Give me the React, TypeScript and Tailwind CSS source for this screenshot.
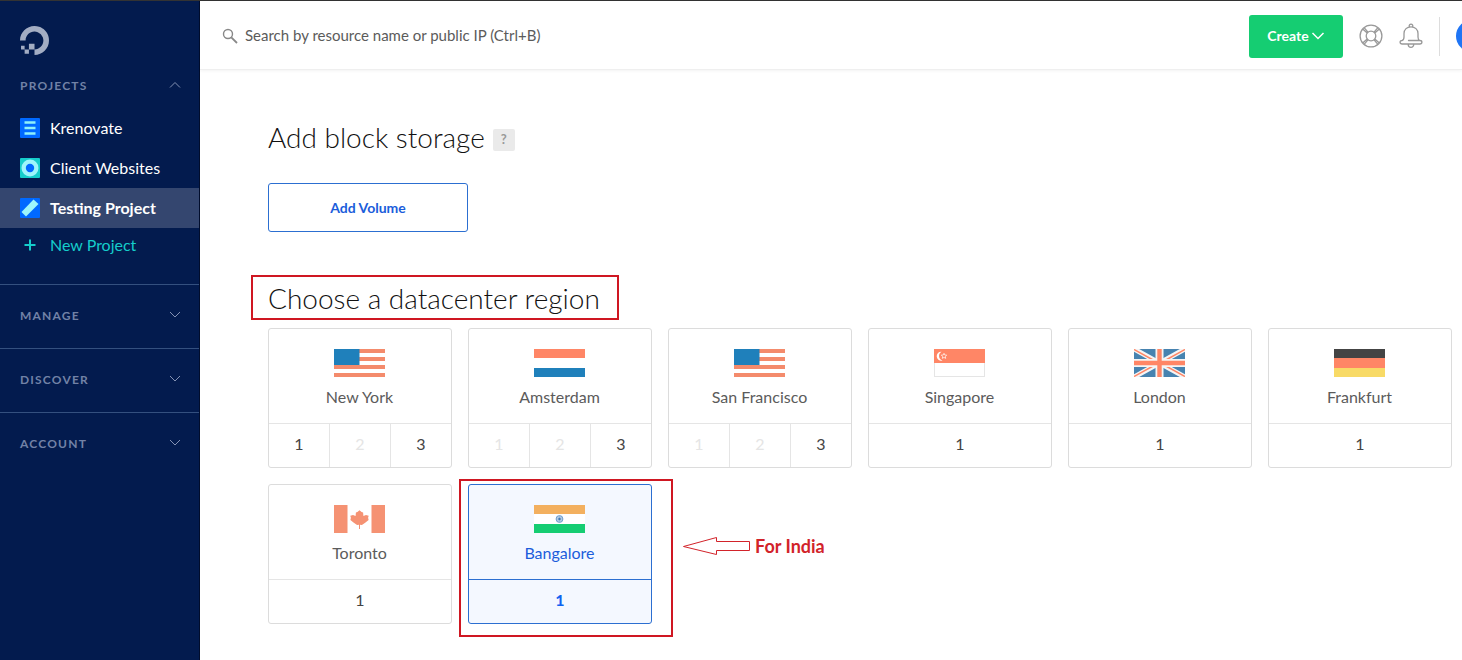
import type { ReactNode } from 'react';

function Logo() {
  return (
    <svg viewBox="0 0 24 24" className="size-[29px] fill-[#a3adc3]" aria-hidden="true">
      <path d="M12.04 0C5.408-.02.005 5.37.005 11.992h4.638c0-4.923 4.882-8.731 10.064-6.855a6.95 6.95 0 0 1 4.147 4.148c1.889 5.177-1.924 10.055-6.84 10.064v-4.61H7.391v4.623h4.61V24c7.86 0 13.967-7.588 11.397-15.83-1.115-3.59-3.985-6.446-7.575-7.575A12.8 12.8 0 0 0 12.039 0zM7.39 19.362H3.828v3.564H7.39zm-3.563 0v-2.978H.85v2.978z" />
    </svg>
  );
}

function Chevron({ up = false }: { up?: boolean }) {
  return (
    <svg viewBox="0 0 12 8" className="mb-[2px] h-2 w-3 fill-none stroke-[#8492b3]" aria-hidden="true">
      <path d={up ? 'M1 6.5 6 1.5 11 6.5' : 'M1 1 6 6 11 1'} />
    </svg>
  );
}

function ListIcon() {
  return (
    <svg viewBox="0 0 20 20" className="size-5" aria-hidden="true">
      <rect width="20" height="20" rx="1" fill="#0069ff" />
      <path d="M4.500 4.500h11M4.500 10h11M4.500 15.500h11" stroke="#8ff0fa" strokeWidth="2.600" />
    </svg>
  );
}

function CircleIcon() {
  return (
    <svg viewBox="0 0 20 20" className="size-5" aria-hidden="true">
      <rect width="20" height="20" rx="1" fill="#15cdcb" />
      <circle cx="10" cy="10" r="8.500" fill="#9df5fb" />
      <circle cx="10" cy="10" r="4.200" fill="#0069ff" />
    </svg>
  );
}

function SlashIcon() {
  return (
    <svg viewBox="0 0 20 20" className="size-5" aria-hidden="true">
      <rect width="20" height="20" rx="1" fill="#0069ff" />
      <path d="M1.500 14 13.500 1.500 18.500 6 6 18.500Z" fill="#9df5fb" />
    </svg>
  );
}

const projects: { name: string; icon: ReactNode; active?: boolean }[] = [
  { name: 'Krenovate', icon: <ListIcon /> },
  { name: 'Client Websites', icon: <CircleIcon /> },
  { name: 'Testing Project', icon: <SlashIcon />, active: true },
];

function Sidebar() {
  return (
    <aside className="w-[200px] shrink-0 border-r border-[#010d2c] bg-[#031b4e] pb-6">
      <a href="#home" aria-label="Home" className="block px-5 pt-[25px]">
        <Logo />
      </a>
      <button type="button" className="mt-[21px] flex h-5 w-full items-center justify-between pr-[18px] pl-5 text-xs font-bold tracking-widest text-[#7282a6]">
        PROJECTS
        <Chevron up />
      </button>
      <nav aria-label="Projects" className="mt-3">
        {projects.map((p) => (
          <a
            key={p.name}
            href="#project"
            className={
              p.active
                ? 'flex h-10 items-center gap-[10px] bg-[#34466f] px-5 pb-px font-bold text-white'
                : 'flex h-10 items-center gap-[10px] px-5 pb-px text-white'
            }
          >
            {p.icon}
            {p.name}
          </a>
        ))}
        <a href="#new" className="flex h-9 items-center gap-[10px] px-5 pb-[2px] text-[#15cdcb]">
          <svg viewBox="0 0 20 20" className="size-5 fill-none stroke-current stroke-2" aria-hidden="true">
            <path d="M10 4.500v11M4.500 10h11" />
          </svg>
          New Project
        </a>
      </nav>
      <div className="mt-5">
        {['MANAGE', 'DISCOVER', 'ACCOUNT'].map((s) => (
          <button
            key={s}
            type="button"
            className="flex h-16 w-full items-center justify-between border-t border-[#34507f] pr-[18px] pb-[2px] pl-5 text-xs font-bold tracking-widest text-[#7282a6]"
          >
            {s}
            <Chevron />
          </button>
        ))}
      </div>
    </aside>
  );
}

function Header() {
  return (
    <header className="flex h-[69px] items-center overflow-hidden border-b border-[#efefef] pl-[22px] shadow-[0_1px_3px_rgba(0,0,0,0.05)]">
      <label htmlFor="search" aria-label="Search" className="pt-[2px] text-[#888]">
        <svg viewBox="0 0 16 16" className="size-4 fill-none stroke-current" aria-hidden="true">
          <circle cx="6" cy="6" r="4.500" strokeWidth="1.400" />
          <path d="m9.300 9.300 5.700 5.700" strokeWidth="1.800" />
        </svg>
      </label>
      <input
        id="search"
        type="search"
        placeholder="Search by resource name or public IP (Ctrl+B)"
        className="h-10 min-w-0 flex-1 px-[7px] text-[15px] text-[#444] outline-none placeholder:text-[#5b5b5b]"
      />
      <div className="-mr-[26px] flex shrink-0 items-center pt-[2px]">
        <button type="button" className="flex h-[43px] w-[94px] items-center justify-center gap-[2px] rounded-[3px] bg-[#15cd72] text-sm font-bold text-white">
          Create
          <svg viewBox="0 0 14 10" className="h-[10px] w-[14px] fill-none stroke-current" aria-hidden="true">
            <path d="m1.500 2 5.500 5.500L12.500 2" strokeWidth="1.500" />
          </svg>
        </button>
        <button type="button" aria-label="Support" className="ml-4 text-[#999]">
          <svg viewBox="0 0 24 24" className="size-6 fill-none stroke-current" strokeWidth="1.300" aria-hidden="true">
            <circle cx="12" cy="12" r="10.900" />
            <circle cx="12" cy="12" r="4.800" />
            <path d="m4 5.200 4.200 3.800M5.300 3.900 9 8.200M20 5.200l-4.200 3.800M18.700 3.900 15 8.200M4 18.800 8.200 15M5.300 20.100 9 15.800M20 18.800 15.800 15M18.700 20.100 15 15.800" />
          </svg>
        </button>
        <button type="button" aria-label="Notifications" className="ml-4 text-[#999]">
          <svg viewBox="0 0 24 26" className="h-[26px] w-6 fill-none stroke-current" strokeWidth="1.300" strokeLinecap="round" strokeLinejoin="round" aria-hidden="true">
            <path d="M10.300 3.500a1.800 1.800 0 1 1 3.400 0M9.500 17.500H20.800c2.800 0 2.800 3.500 0 3.500H3.200c-2.800 0-2.800-3.500-.2-3.500 1.800-.4 2-1.800 2-3.500V10.500C5 6.500 8 3.800 12 3.800s7 2.700 7 6.700V14c0 1.700.3 3 1.800 3.500M9.200 21.200c0 4.200 5.600 4.200 5.600 0" />
          </svg>
        </button>
        <span className="ml-4 h-[39px] w-px bg-[#ddd]" />
        <button type="button" aria-label="Account menu" className="ml-4 size-8 rounded-full bg-[#1f75f5]" />
      </div>
    </header>
  );
}

function UsFlag() {
  return (
    <>
      <path d="M0 2h51M0 10h51M0 18h51M0 26h51" stroke="#f48b6c" strokeWidth="4" />
      <rect width="25.500" height="16" fill="#1f80bb" />
    </>
  );
}

const flags: Record<string, ReactNode> = {
  us: <UsFlag />,
  nl: (
    <>
      <rect width="51" height="9" fill="#ff8666" />
      <rect y="19" width="51" height="9" fill="#1f80bb" />
    </>
  ),
  sg: (
    <>
      <rect x=".5" y=".5" width="50" height="27" fill="#fff" stroke="#e5e5e5" />
      <rect width="51" height="14" fill="#ff8666" />
      <path d="M7.500 2.700a4.500 4.500 0 1 0 1 8.800 4.800 4.800 0 0 1-1-8.800Z" fill="#fff" />
      <path d="m10 4.300.8 1.700 1.900.2-1.400 1.300.4 1.900-1.700-1-1.700 1 .4-1.900-1.400-1.300 1.900-.2Z" fill="none" stroke="#fff" strokeWidth=".7" />
    </>
  ),
  gb: (
    <>
      <rect width="51" height="28" fill="#4783b0" />
      <path d="M0 0 51 28M51 0 0 28" stroke="#f5f5f5" strokeWidth="5" />
      <path d="M0 .5 20 11.500M51 .5 31 11.500M0 27.500 20 16.500M51 27.500 31 16.500" stroke="#ff8666" strokeWidth="1.500" />
      <path d="M25.500 0v28M0 14h51" stroke="#f5f5f5" strokeWidth="8" />
      <path d="M25.500 0v28M0 14h51" stroke="#ff8666" strokeWidth="4.400" />
    </>
  ),
  de: (
    <>
      <rect width="51" height="9" fill="#444" />
      <rect y="9" width="51" height="10" fill="#ff8666" />
      <rect y="19" width="51" height="9" fill="#f8da66" />
    </>
  ),
  ca: (
    <>
      <rect width="13.500" height="28" fill="#f59273" />
      <rect x="37.500" width="13.500" height="28" fill="#f59273" />
      <path d="M25.500 5.200 27.600 7l1.500.6.3 3.500 2.600-1 2.700.6-.6 2 .5 2.200-3.400 2.800-3.300 2.200-1.900-.2v4.200h-1v-4.200l-1.900.2-3.300-2.200-3.400-2.800.5-2.200-.6-2 2.700-.6 2.600 1 .3-3.500 1.500-.6Z" fill="#f59273" />
    </>
  ),
  in: (
    <>
      <rect width="51" height="28" fill="#fff" />
      <rect width="51" height="9" fill="#f3b05f" />
      <rect y="19" width="51" height="9" fill="#15cd72" />
      <circle cx="25.500" cy="14" r="3.400" fill="#c3d6ea" stroke="#6d9bcb" />
      <path d="M25.500 11v6M22.500 14h6M23.400 11.900l4.200 4.200M27.600 11.900l-4.200 4.200" stroke="#7fa6d0" strokeWidth=".5" />
      <circle cx="25.500" cy="14" r="1.200" fill="#3f78b5" />
    </>
  ),
};

type Region = { name: string; flag: string; slots: { n: number; off?: boolean }[]; selected?: boolean };

const regions: Region[] = [
  { name: 'New York', flag: 'us', slots: [{ n: 1 }, { n: 2, off: true }, { n: 3 }] },
  { name: 'Amsterdam', flag: 'nl', slots: [{ n: 1, off: true }, { n: 2, off: true }, { n: 3 }] },
  { name: 'San Francisco', flag: 'us', slots: [{ n: 1, off: true }, { n: 2, off: true }, { n: 3 }] },
  { name: 'Singapore', flag: 'sg', slots: [{ n: 1 }] },
  { name: 'London', flag: 'gb', slots: [{ n: 1 }] },
  { name: 'Frankfurt', flag: 'de', slots: [{ n: 1 }] },
  { name: 'Toronto', flag: 'ca', slots: [{ n: 1 }] },
  { name: 'Bangalore', flag: 'in', slots: [{ n: 1 }], selected: true },
];

function Callout() {
  return (
    <>
      <div className="pointer-events-none absolute -top-[6px] -right-[22px] -bottom-[14px] -left-[10px] border-2 border-[#cf1722]" />
      <div className="absolute top-[49px] left-[213px] flex items-center gap-1 font-bold whitespace-nowrap text-[#d2232a]">
        <svg viewBox="0 0 69 20" className="h-5 w-[69px] fill-none stroke-current" aria-hidden="true">
          <path d="M1.500 10.500 34.500 1.500v4h33v9h-33v4Z" />
        </svg>
        <span className="text-[18px] leading-6">For India</span>
      </div>
    </>
  );
}

function RegionCard({ region }: { region: Region }) {
  const on = region.selected;
  return (
    <li
      className={
        on
          ? 'relative w-[184px] rounded-[3px] border border-[#2c6fd1] bg-[#f4f8ff] text-[#1b5ddb]'
          : 'relative w-[184px] rounded-[3px] border border-[#dcdcdc] bg-white text-[#5b5b5b]'
      }
    >
      <div className="flex h-[94px] flex-col items-center pt-5 pr-px">
        <svg viewBox="0 0 51 28" className="h-7 w-[51px]" aria-hidden="true">
          {flags[region.flag]}
        </svg>
        <h3 className="mt-2">{region.name}</h3>
      </div>
      <div className={on ? 'flex divide-x border-t border-[#2c6fd1]' : 'flex divide-x divide-[#e5e5e5] border-t border-[#e5e5e5]'}>
        {region.slots.map((s) => (
          <button
            key={s.n}
            type="button"
            disabled={s.off}
            aria-label={`${region.name} ${s.n}`}
            aria-pressed={!!on}
            className={
              s.off
                ? 'h-[43px] flex-1 pb-1 text-[#e5e5e5]'
                : on
                  ? 'h-[43px] flex-1 pb-1 font-bold text-[#0f62f0]'
                  : 'h-[43px] flex-1 pb-1 text-[#444]'
            }
          >
            {s.n}
          </button>
        ))}
      </div>
      {on && <Callout />}
    </li>
  );
}

export default function App() {
  return (
    <div className="flex min-h-screen border-t border-[#333] bg-white font-['Lato','Open_Sans',sans-serif] text-base">
      <Sidebar />
      <div className="min-w-0 flex-1">
        <Header />
        <main className="pt-[49px] pr-2 pb-9 pl-[68px]">
          <div className="flex items-center gap-2">
            <h1 className="text-[28px] leading-9 font-light text-[#111]">Add block storage</h1>
            <button type="button" aria-label="Help" className="mt-[6px] size-[22px] rounded-[2px] bg-[#eaeaea] text-[13px] font-bold text-[#999]">
              ?
            </button>
          </div>
          <button type="button" className="mt-7 h-[49px] w-[200px] rounded-[3px] border border-[#2c6fd1] text-sm font-bold text-[#1b5ddb]">
            Add Volume
          </button>
          <h2 className="mt-[43px] -ml-[17px] flex h-[45px] w-[368px] items-center border-2 border-[#cf1722] px-[15px] text-[28px] leading-9 font-light text-[#111]">
            Choose a datacenter region
          </h2>
          <ul className="mt-2 flex flex-wrap gap-4">
            {regions.map((r) => (
              <RegionCard key={r.name} region={r} />
            ))}
          </ul>
        </main>
      </div>
    </div>
  );
}
